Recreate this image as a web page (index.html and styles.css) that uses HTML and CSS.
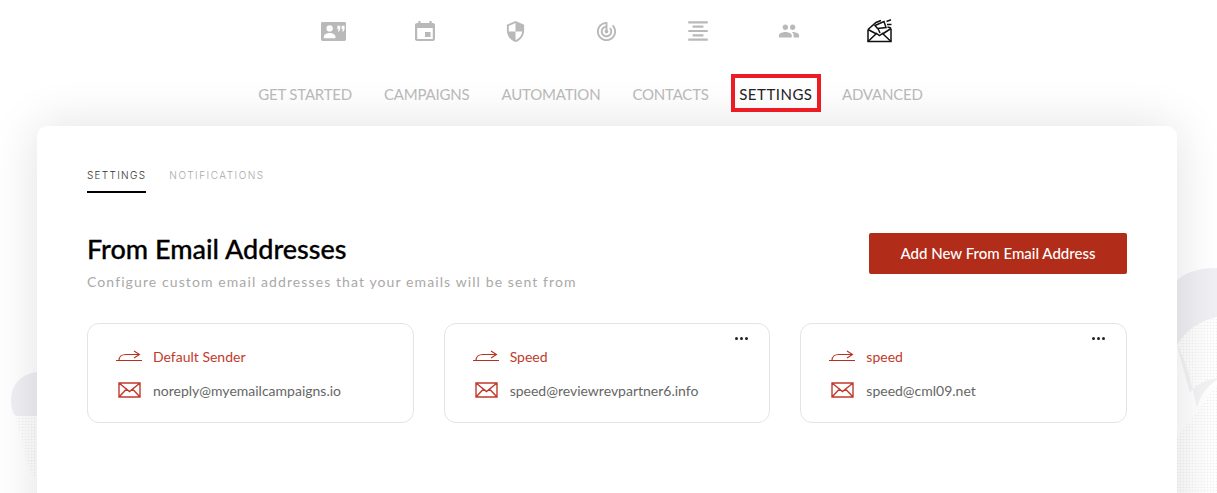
FILE: index.html
```html
<!DOCTYPE html>
<html lang="en">
<head>
  <meta charset="UTF-8">
  <meta name="viewport" content="width=device-width, initial-scale=1.0">
  <title>Settings</title>
  <link rel="stylesheet" href="styles.css">
</head>
<body>
<!-- faded shapes behind the card -->
<svg class="backdrop" width="1217" height="493" viewBox="0 0 1217 493" aria-hidden="true">
  <defs>
    <pattern id="dots" width="3" height="3" patternUnits="userSpaceOnUse">
      <circle cx="1.5" cy="1.5" r="0.8" fill="#f1f1f3"></circle>
    </pattern>
  </defs>
  <path d="M37 372C20 374 11 386 11 400C11 408 13 414 16 416L37 416Z" fill="#f0f0f4"></path>
  <path d="M16 416L37 416L37 478L32 474C24 455 20 435 16 416Z" fill="url(#dots)"></path>
  <path d="M1177 280C1188 271 1200 268 1217 268L1217 317C1205 320 1190 325 1177 345Z" fill="#f0f0f4"></path>
  <path d="M1177 345C1190 325 1205 320 1217 317L1217 378C1205 380 1195 385 1190 393C1188 375 1184 358 1177 345Z" fill="url(#dots)"></path>
  <path d="M1177 345C1186 360 1192 385 1197 408C1200 395 1208 385 1217 380L1217 378C1205 380 1195 385 1190 393Z" fill="#f3f3f6"></path>
  <path d="M1177 438C1188 425 1205 400 1217 385L1217 493L1177 493Z" fill="url(#dots)"></path>
</svg>

<div class="page">
  <div class="icon-row">
    <div class="icon-cell">
      <svg width="25" height="19" viewBox="0 0 26 20" preserveAspectRatio="none">
        <path fill="#b9b9b9" fill-rule="evenodd" d="M1.5 0h23A1.5 1.5 0 0 1 26 1.500v17a1.500 1.500 0 0 1-1.500 1.500h-23A1.500 1.500 0 0 1 0 18.500v-17A1.500 1.500 0 0 1 1.500 0zM9 3.500a3.300 3.300 0 1 0 0 6.600a3.300 3.300 0 0 0 0-6.600zM3 17h12v-1.800c0-2.400-3.500-3.700-6-3.700s-6 1.300-6 3.700zM17 4v3.500h1.500L17.500 10h1.300l1.200-2.500V4zM21.500 4v3.500H23L22 10h1.300l1.200-2.500V4z"></path>
      </svg>
    </div>
    <div class="icon-cell">
      <svg width="20" height="20" viewBox="3 1 18 20" preserveAspectRatio="none"><path fill="#b9b9b9" d="M17 12h-5v5h5v-5zM16 1v2H8V1H6v2H5c-1.110 0-1.990.9-1.990 2L3 19c0 1.100.89 2 2 2h14c1.100 0 2-.9 2-2V5c0-1.100-.9-2-2-2h-1V1h-2zm3 18H5V8h14v11z"></path></svg>
    </div>
    <div class="icon-cell">
      <svg width="23" height="23" viewBox="0 0 24 24"><path fill="#b9b9b9" d="M12 1L3 5v6c0 5.550 3.840 10.740 9 12 5.160-1.260 9-6.450 9-12V5l-9-4zm0 10.990h7c-.53 4.120-3.280 7.790-7 8.940V12H5V6.300l7-3.110v8.800z"></path></svg>
    </div>
    <div class="icon-cell">
      <svg width="23" height="23" viewBox="0 0 24 24"><path fill="#b9b9b9" d="M19.070 4.930l-1.410 1.410C19.100 7.790 20 9.790 20 12c0 4.420-3.580 8-8 8s-8-3.580-8-8c0-4.080 3.050-7.440 7-7.930v2.020C8.160 6.570 6 9.030 6 12c0 3.310 2.690 6 6 6s6-2.690 6-6c0-1.660-.67-3.160-1.760-4.240l-1.410 1.410C15.550 9.900 16 10.900 16 12c0 2.210-1.790 4-4 4s-4-1.790-4-4c0-1.860 1.280-3.410 3-3.860v2.140c-.6.35-1 .98-1 1.720 0 1.100.9 2 2 2s2-.9 2-2c0-.74-.4-1.380-1-1.720V2h-1C6.480 2 2 6.480 2 12s4.480 10 10 10 10-4.480 10-10c0-2.760-1.120-5.260-2.930-7.070z"></path></svg>
    </div>
    <div class="icon-cell">
      <svg width="26" height="26" viewBox="0 0 24 24"><path fill="#b9b9b9" d="M7 15v2h10v-2H7zm-4 6h18v-2H3v2zm0-8h18v-2H3v2zm4-6v2h10V7H7zM3 3v2h18V3H3z"></path></svg>
    </div>
    <div class="icon-cell">
      <svg width="22" height="22" viewBox="0 0 24 24"><path fill="#b9b9b9" d="M16 11c1.660 0 2.990-1.340 2.990-3S17.660 5 16 5c-1.660 0-3 1.340-3 3s1.340 3 3 3zm-8 0c1.660 0 2.990-1.340 2.990-3S9.660 5 8 5C6.340 5 5 6.340 5 8s1.340 3 3 3zm0 2c-2.330 0-7 1.170-7 3.500V19h14v-2.500c0-2.330-4.670-3.500-7-3.500zm8 0c-.29 0-.62.02-.97.05 1.160.84 1.970 1.970 1.970 3.450V19h6v-2.500c0-2.330-4.670-3.500-7-3.500z"></path></svg>
    </div>
    <div class="icon-cell">
      <svg width="25" height="24" viewBox="0 0 25 24" fill="none" stroke="#111" stroke-width="1.500">
        <path d="M1 10.500V22.500H24V9.500"></path>
        <path d="M1 10.500L9 3.500L14 1.500"></path>
        <path d="M1 22.500L9.500 14.500L12.500 16.500L15.500 14.500L24 22.500"></path>
        <path d="M1 10.500L9.500 15"></path>
        <path d="M24 9.500L15.500 15"></path>
        <path d="M8 6.500L17 2.500L19 8.500L10.500 9.500Z"></path>
        <path d="M11 9.500L13 14"></path>
        <path d="M19.500 2.500L24 .8M20 5.500H24.500M20.500 8L24 9"></path>
      </svg>
    </div>
  </div>

  <nav class="main-nav">
    <a href="#">GET STARTED</a>
    <a href="#">CAMPAIGNS</a>
    <a href="#">AUTOMATION</a>
    <a href="#">CONTACTS</a>
    <a href="#" class="active">SETTINGS</a>
    <a href="#">ADVANCED</a>
  </nav>

  <div class="card">
    <div class="tabs">
      <a href="#" class="tab active">SETTINGS</a>
      <a href="#" class="tab">NOTIFICATIONS</a>
    </div>

    <div class="section-head">
      <div>
        <h1>From Email Addresses</h1>
        <p>Configure custom email addresses that your emails will be sent from</p>
      </div>
      <button class="add-btn">Add New From Email Address</button>
    </div>

    <div class="senders">
      <div class="sender">
        <div class="sender-line name">
          <svg class="arrow" width="26" height="12" viewBox="0 0 26 12"><path d="M0 10.500H26M3 10.500C3 6.500 6 4.500 10 4.500H23M18 1L23.500 4.500L18 8" fill="none" stroke="#b83022" stroke-width="1.100"></path></svg>
          <span>Default Sender</span>
        </div>
        <div class="sender-line email">
          <svg class="envelope" width="23" height="16" viewBox="0 0 23 16"><path d="M1 1H22V15H1ZM1 1L11.500 9.500L22 1M1 15L8.500 7M22 15L14.500 7" fill="none" stroke="#bf3a2b" stroke-width="1.400"></path></svg>
          <span>noreply@myemailcampaigns.io</span>
        </div>
      </div>
      <div class="sender">
        <div class="more"><i></i><i></i><i></i></div>
        <div class="sender-line name">
          <svg class="arrow" width="26" height="12" viewBox="0 0 26 12"><path d="M0 10.500H26M3 10.500C3 6.500 6 4.500 10 4.500H23M18 1L23.500 4.500L18 8" fill="none" stroke="#b83022" stroke-width="1.100"></path></svg>
          <span>Speed</span>
        </div>
        <div class="sender-line email">
          <svg class="envelope" width="23" height="16" viewBox="0 0 23 16"><path d="M1 1H22V15H1ZM1 1L11.500 9.500L22 1M1 15L8.500 7M22 15L14.500 7" fill="none" stroke="#bf3a2b" stroke-width="1.400"></path></svg>
          <span>speed@reviewrevpartner6.info</span>
        </div>
      </div>
      <div class="sender">
        <div class="more"><i></i><i></i><i></i></div>
        <div class="sender-line name">
          <svg class="arrow" width="26" height="12" viewBox="0 0 26 12"><path d="M0 10.500H26M3 10.500C3 6.500 6 4.500 10 4.500H23M18 1L23.500 4.500L18 8" fill="none" stroke="#b83022" stroke-width="1.100"></path></svg>
          <span>speed</span>
        </div>
        <div class="sender-line email">
          <svg class="envelope" width="23" height="16" viewBox="0 0 23 16"><path d="M1 1H22V15H1ZM1 1L11.500 9.500L22 1M1 15L8.500 7M22 15L14.500 7" fill="none" stroke="#bf3a2b" stroke-width="1.400"></path></svg>
          <span>speed@cml09.net</span>
        </div>
      </div>
    </div>
  </div>
</div>
</body>
</html>
```

FILE: styles.css
```css
html, body {
  height: 100%;
}
body {
  margin: 0;
  font-family: 'Lato', 'Liberation Sans', sans-serif;
  background-color: #ffffff;
  overflow: hidden;
  position: relative;
}
.backdrop {
  position: absolute;
  left: 0;
  top: 0;
}
.page {
  position: relative;
  width: 1214px;
}
.icon-row {
  display: flex;
  justify-content: center;
  height: 62px;
  padding-right: 1px;
}
.icon-cell {
  width: 91px;
  height: 62px;
  display: flex;
  align-items: center;
  justify-content: center;
}
.main-nav {
  display: flex;
  justify-content: center;
  align-items: center;
  gap: 32px;
  height: 62px;
  margin-bottom: 2px;
  padding-right: 33px;
}
.main-nav a {
  color: #b8b8b8;
  font-size: 15px;
  letter-spacing: -0.2px;
  padding-top: 2px;
  text-decoration: none;
}
.main-nav a.active {
  color: #222222;
  letter-spacing: 0.5px;
  border: 4px solid #ed1c24;
  padding: 7px 4.5px 5px;
  margin: 0 -11px 0 -10px;
}
.card {
  width: 1140px;
  min-height: 500px;
  margin: 0 auto;
  padding: 0 50px;
  box-sizing: border-box;
  background-color: #ffffff;
  border-radius: 10px;
  box-shadow: 0 0 50px rgba(0, 0, 0, 0.12);
}
.tabs {
  display: flex;
  gap: 23px;
  padding-top: 43px;
}
.tab {
  font-family: 'Inter', 'Liberation Sans', sans-serif;
  font-size: 10px;
  font-weight: 300;
  letter-spacing: 1.5px;
  color: #a8a8a8;
  text-decoration: none;
  padding-bottom: 10px;
  border-bottom: 2px solid transparent;
}
.tab.active {
  color: #333333;
  letter-spacing: 1.3px;
  border-bottom-color: #000000;
}
.section-head {
  display: flex;
  justify-content: space-between;
  align-items: flex-start;
  margin-top: 39px;
}
.section-head h1 {
  margin: 0;
  font-size: 27px;
  font-weight: 500;
  line-height: 34px;
  color: #000000;
  -webkit-text-stroke: 0.3px #000000;
}
.section-head p {
  margin: 7px 0 0;
  font-size: 14px;
  letter-spacing: 1.1px;
  color: #a9a9a9;
}
.add-btn {
  width: 258px;
  height: 41px;
  margin-top: 1px;
  padding-bottom: 3px;
  border: none;
  border-radius: 2px;
  background-color: #b22c1a;
  color: #ffffff;
  font-family: inherit;
  font-size: 15px;
  font-weight: 500;
}
.senders {
  display: grid;
  grid-template-columns: repeat(3, 1fr);
  gap: 30px;
  margin-top: 33px;
}
.sender {
  position: relative;
  height: 100px;
  box-sizing: border-box;
  padding: 21px 0 0 28px;
  border: 1px solid #e4e4e4;
  border-radius: 12px;
}
.sender-line {
  display: flex;
  align-items: center;
  font-size: 14px;
  height: 22px;
}
.sender-line.name {
  color: #bf3a2b;
}
.sender-line.email {
  color: #666666;
  margin-top: 12px;
}
.arrow {
  margin-right: 11px;
}
.envelope {
  margin-left: 2px;
  margin-right: 12px;
}
.more {
  position: absolute;
  top: 13px;
  right: 21px;
  display: flex;
  gap: 2px;
}
.more i {
  width: 3px;
  height: 3px;
  border-radius: 50%;
  background-color: #222222;
}
```
